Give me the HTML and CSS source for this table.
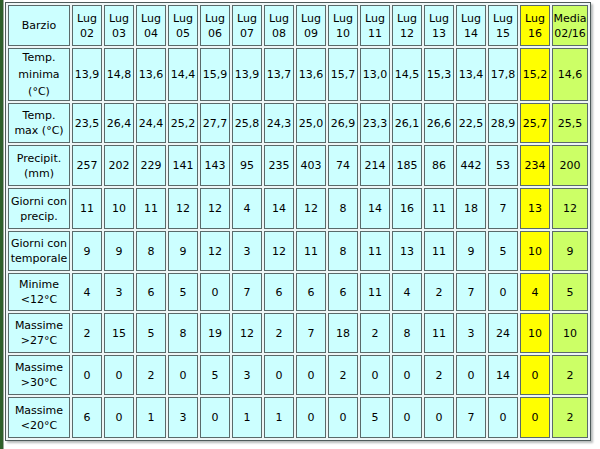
FILE: index.html
```html
<!DOCTYPE html>
<html lang="it">
<head>
<meta charset="utf-8">
<title>Barzio - Luglio</title>
<link rel="stylesheet" href="styles.css">
</head>
<body>
<div class="page">
  <div class="strip"></div>
  <div class="wrap">
    <table class="clima">
      <colgroup>
        <col class="c-label">
        <col class="c-m"><col class="c-m"><col class="c-m"><col class="c-m"><col class="c-m">
        <col class="c-m"><col class="c-m"><col class="c-m"><col class="c-m"><col class="c-m">
        <col class="c-m"><col class="c-m"><col class="c-m"><col class="c-m"><col class="c-m">
        <col class="c-avg">
      </colgroup>
      <tr class="r-head">
        <td>Barzio</td>
        <td>Lug<br>02</td><td>Lug<br>03</td><td>Lug<br>04</td><td>Lug<br>05</td><td>Lug<br>06</td>
        <td>Lug<br>07</td><td>Lug<br>08</td><td>Lug<br>09</td><td>Lug<br>10</td><td>Lug<br>11</td>
        <td>Lug<br>12</td><td>Lug<br>13</td><td>Lug<br>14</td><td>Lug<br>15</td>
        <td class="cur">Lug<br>16</td><td class="avg">Media<br>02/16</td>
      </tr>
      <tr class="r-tall">
        <td>Temp.<br>minima<br>(°C)</td>
        <td>13,9</td><td>14,8</td><td>13,6</td><td>14,4</td><td>15,9</td><td>13,9</td><td>13,7</td><td>13,6</td>
        <td>15,7</td><td>13,0</td><td>14,5</td><td>15,3</td><td>13,4</td><td>17,8</td>
        <td class="cur">15,2</td><td class="avg">14,6</td>
      </tr>
      <tr class="r-a">
        <td>Temp.<br>max (°C)</td>
        <td>23,5</td><td>26,4</td><td>24,4</td><td>25,2</td><td>27,7</td><td>25,8</td><td>24,3</td><td>25,0</td>
        <td>26,9</td><td>23,3</td><td>26,1</td><td>26,6</td><td>22,5</td><td>28,9</td>
        <td class="cur">25,7</td><td class="avg">25,5</td>
      </tr>
      <tr class="r-b">
        <td>Precipit.<br>(mm)</td>
        <td>257</td><td>202</td><td>229</td><td>141</td><td>143</td><td>95</td><td>235</td><td>403</td>
        <td>74</td><td>214</td><td>185</td><td>86</td><td>442</td><td>53</td>
        <td class="cur">234</td><td class="avg">200</td>
      </tr>
      <tr class="r-b">
        <td>Giorni con<br>precip.</td>
        <td>11</td><td>10</td><td>11</td><td>12</td><td>12</td><td>4</td><td>14</td><td>12</td>
        <td>8</td><td>14</td><td>16</td><td>11</td><td>18</td><td>7</td>
        <td class="cur">13</td><td class="avg">12</td>
      </tr>
      <tr class="r-a">
        <td>Giorni con<br>temporale</td>
        <td>9</td><td>9</td><td>8</td><td>9</td><td>12</td><td>3</td><td>12</td><td>11</td>
        <td>8</td><td>11</td><td>13</td><td>11</td><td>9</td><td>5</td>
        <td class="cur">10</td><td class="avg">9</td>
      </tr>
      <tr class="r-c">
        <td>Minime<br>&lt;12°C</td>
        <td>4</td><td>3</td><td>6</td><td>5</td><td>0</td><td>7</td><td>6</td><td>6</td>
        <td>6</td><td>11</td><td>4</td><td>2</td><td>7</td><td>0</td>
        <td class="cur">4</td><td class="avg">5</td>
      </tr>
      <tr class="r-a">
        <td>Massime<br>&gt;27°C</td>
        <td>2</td><td>15</td><td>5</td><td>8</td><td>19</td><td>12</td><td>2</td><td>7</td>
        <td>18</td><td>2</td><td>8</td><td>11</td><td>3</td><td>24</td>
        <td class="cur">10</td><td class="avg">10</td>
      </tr>
      <tr class="r-a">
        <td>Massime<br>&gt;30°C</td>
        <td>0</td><td>0</td><td>2</td><td>0</td><td>5</td><td>3</td><td>0</td><td>0</td>
        <td>2</td><td>0</td><td>0</td><td>2</td><td>0</td><td>14</td>
        <td class="cur">0</td><td class="avg">2</td>
      </tr>
      <tr class="r-b">
        <td>Massime<br>&lt;20°C</td>
        <td>6</td><td>0</td><td>1</td><td>3</td><td>0</td><td>1</td><td>1</td><td>0</td>
        <td>0</td><td>5</td><td>0</td><td>0</td><td>7</td><td>0</td>
        <td class="cur">0</td><td class="avg">2</td>
      </tr>
    </table>
  </div>
</div>
</body>
</html>
```

FILE: styles.css
```css
html, body {
  margin: 0;
  padding: 0;
  background: #ffffff;
}

.page {
  display: flex;
  height: 449px;
}

.strip {
  width: 3px;
  flex: none;
  background: #2f5f2a;
  border-right: 1px solid #9aa89a;
}

.wrap {
  padding: 2px 0 0 1px;
}

.clima {
  table-layout: fixed;
  width: 586px;
  border-collapse: separate;
  border-spacing: 2px;
  border: 1px solid #4f5b5b;
  background: #eef6f6;
  box-shadow: 2px 2px 2px #b8bcbc;
  font-family: "DejaVu Sans", "Liberation Sans", sans-serif;
  font-size: 11px;
  line-height: 15px;
  color: #000000;
}

.c-label { width: 62px; }
.c-m { width: 30px; }
.c-avg { width: 36px; }

.clima td {
  box-sizing: border-box;
  padding: 0;
  border: 1px solid #5a6a6a;
  background: #ccffff;
  text-align: center;
  vertical-align: middle;
  white-space: nowrap;
  overflow: visible;
}

.clima td.cur { background: #ffff00; }
.clima td.avg { background: #ccff66; }

.r-head td { height: 41px; }
.r-tall td { height: 51px; line-height: 17px; }
.r-a td { height: 40px; }
.r-b td { height: 41px; }
.r-c td { height: 38px; }
```
